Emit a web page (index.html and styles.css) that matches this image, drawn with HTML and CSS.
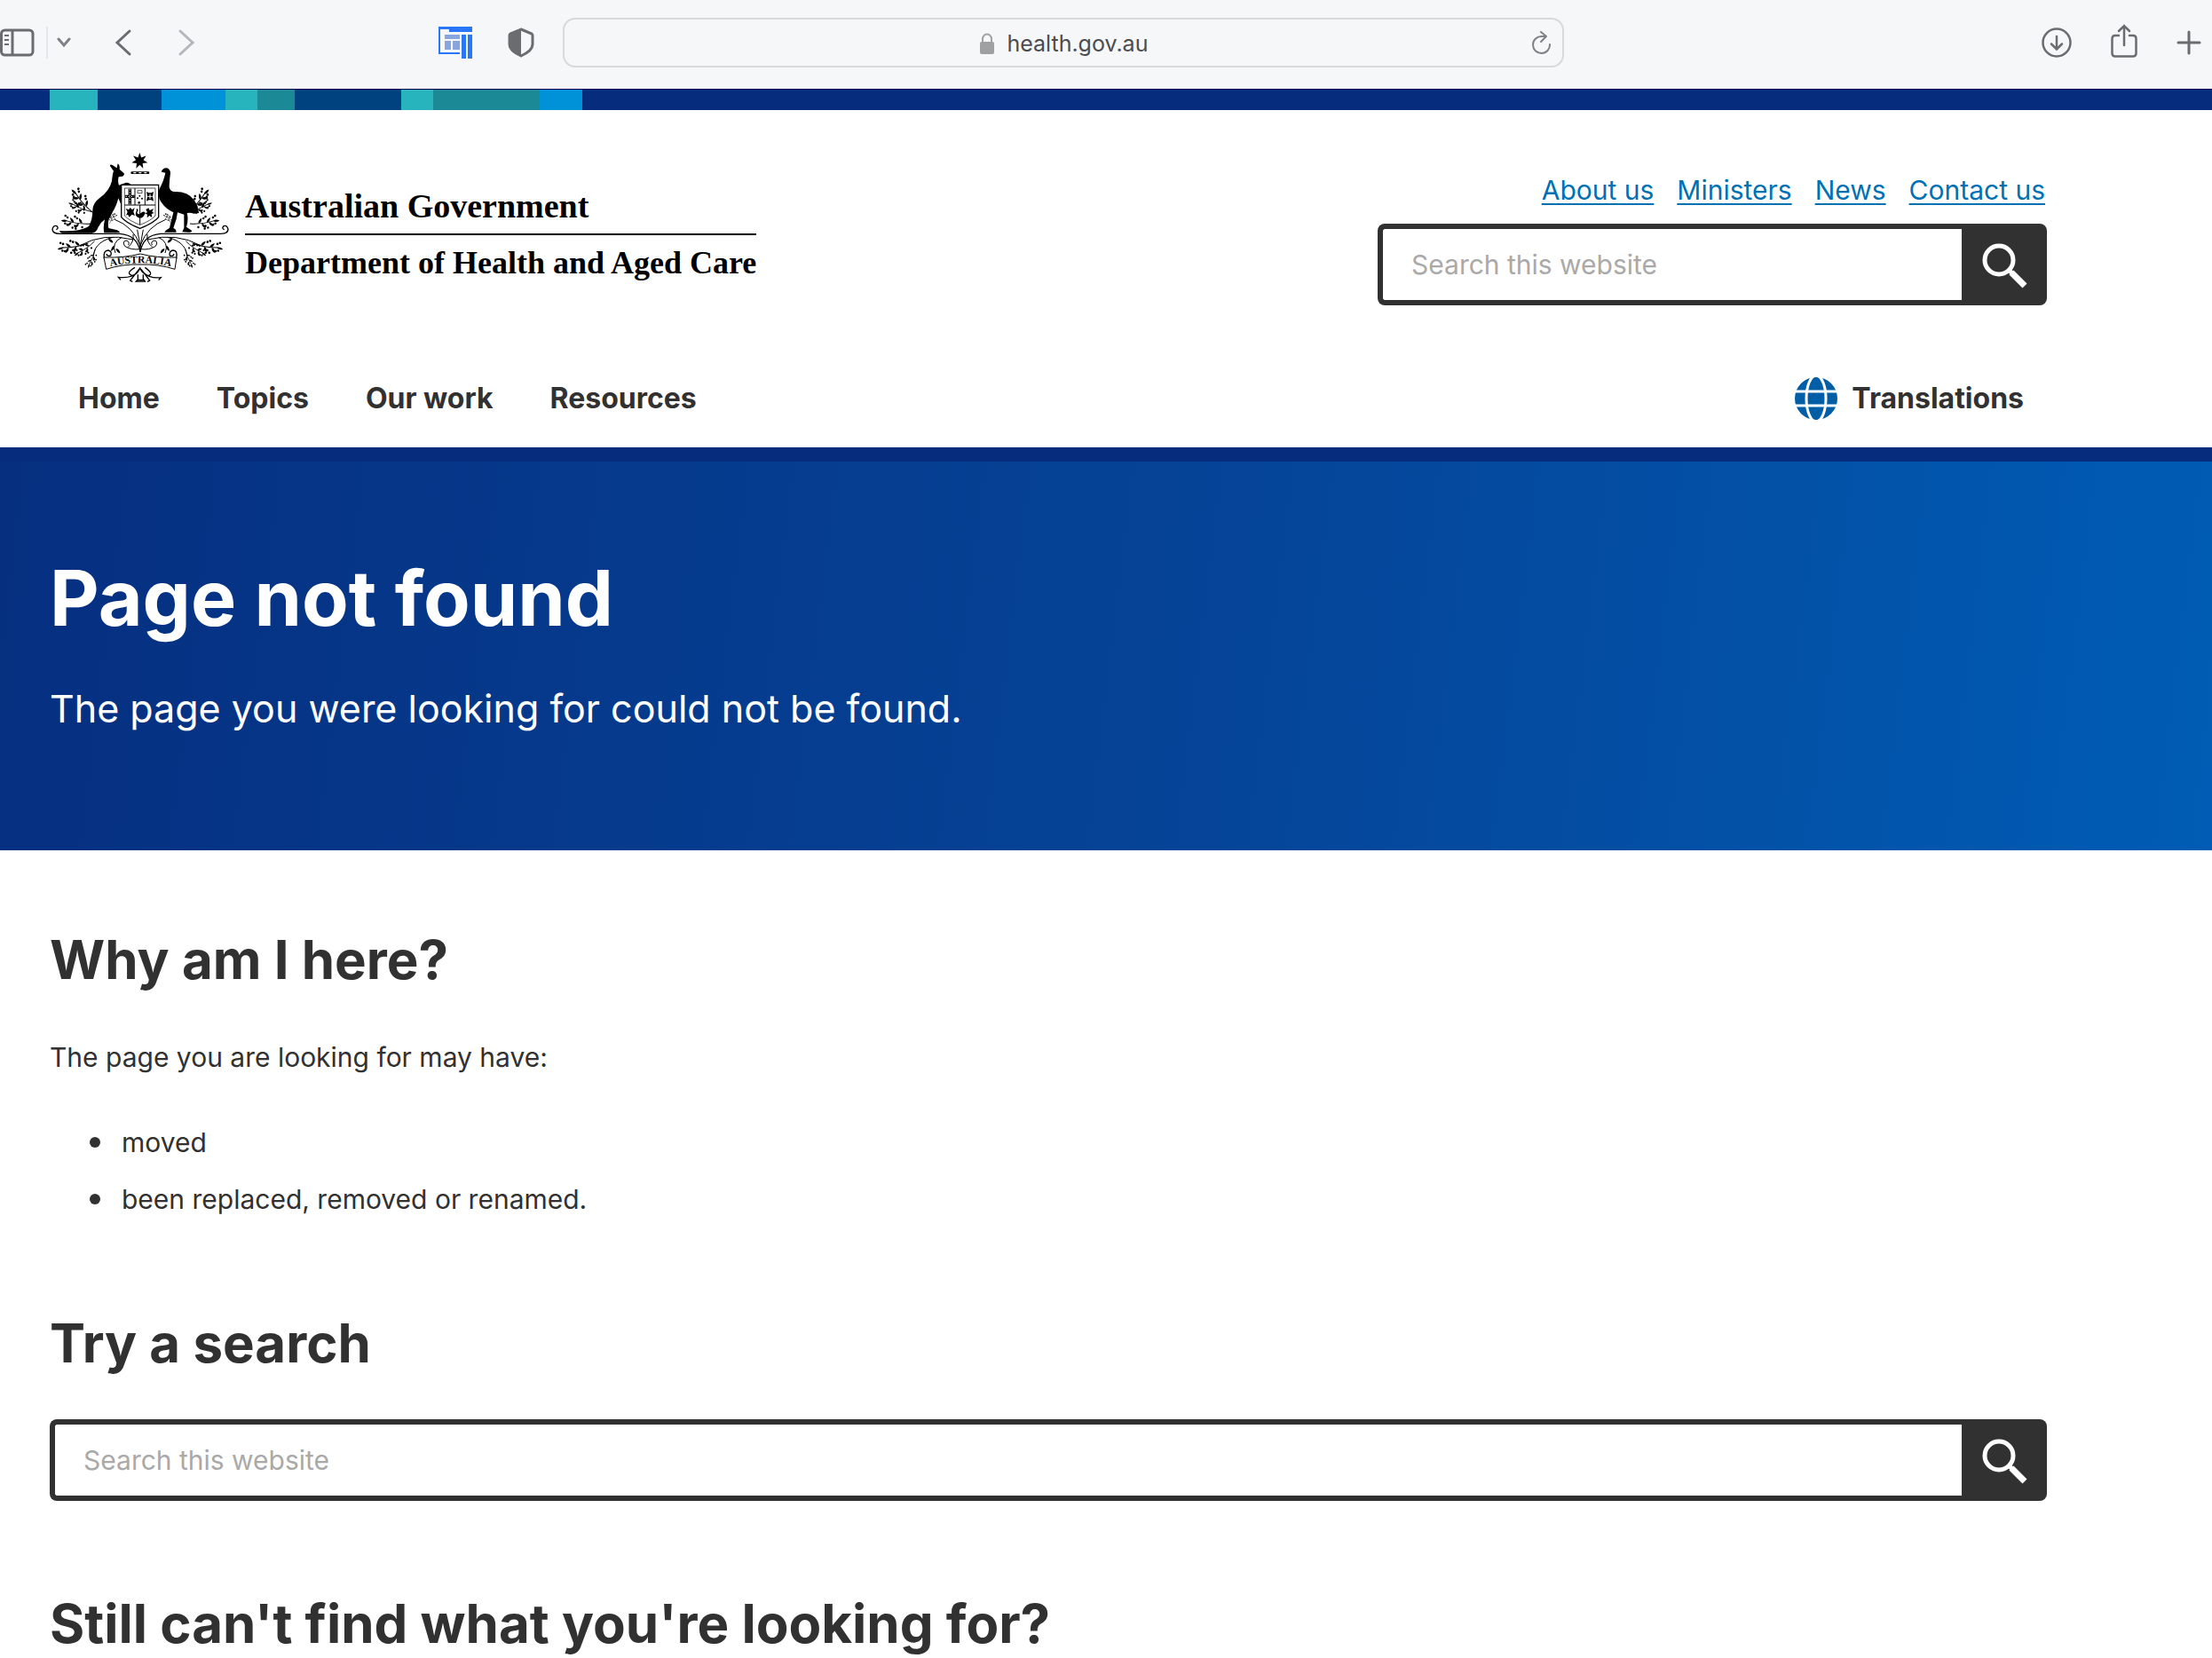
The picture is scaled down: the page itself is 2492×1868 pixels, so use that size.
FILE: index.html
```html
<!DOCTYPE html>
<html lang="en">

<head>
    <meta charset="UTF-8">
    <meta name="viewport" content="width=device-width, initial-scale=1">
    <title>Page not found</title>
    <link rel="stylesheet" href="styles.css">
</head>

<body>

    <div class="toolbar">
        <div class="tools">
            <button class="tool" aria-label="Sidebar">
                <svg width="40" height="32" viewBox="0 0 40 32" fill="none" stroke="#6b6c6f" stroke-width="3">
                    <rect x="1.5" y="2" width="35.500" height="28" rx="4" />
                    <path d="M14 2v28" />
                    <path d="M5 8h5M5 13h5M5 18h5" stroke-width="2" />
                </svg>
            </button>
            <span class="divider"></span>
            <button class="tool chevron" aria-label="Tab groups">
                <svg width="16" height="12" viewBox="0 0 16 12" fill="none" stroke="#7f8188" stroke-width="3" stroke-linecap="round">
                    <path d="M2 2l6 7 6-7" />
                </svg>
            </button>
            <button class="tool back" aria-label="Back">
                <svg width="20" height="32" viewBox="0 0 20 32" fill="none" stroke="#6b6c6f" stroke-width="3" stroke-linecap="round">
                    <path d="M17 3L3 16l14 13" />
                </svg>
            </button>
            <button class="tool forward" aria-label="Forward">
                <svg width="20" height="32" viewBox="0 0 20 32" fill="none" stroke="#b6b7ba" stroke-width="3" stroke-linecap="round">
                    <path d="M3 3l14 13L3 29" />
                </svg>
            </button>
        </div>

        <div class="tools extensions">
            <button class="tool" aria-label="Reader extension">
                <svg width="38" height="36" viewBox="0 0 38 36">
                    <path fill="#2877f6" d="M0 0h38v6H12V3H2v26h22v2H0z" />
                    <path fill="#88a5de" d="M7 9h17v5H7zM7 16h7v10H7zM16 16h8v10h-8z" />
                    <path fill="#2877f6" d="M26 9h5v27h-5zM33 9h5v27h-5z" />
                </svg>
            </button>
            <button class="tool" aria-label="Privacy report">
                <svg width="30" height="34" viewBox="0 0 30 34">
                    <path d="M15 2l12 5q1 1 1 2v10q0 7-13 13Q2 26 2 19V9q0-1 1-2z" fill="none" stroke="#6b6c6f" stroke-width="3" />
                    <path d="M15 1v32Q1 27 1 19V7z" fill="#6b6c6f" />
                </svg>
            </button>
        </div>

        <div class="address">
            <div class="url">
                <svg width="16" height="24" viewBox="0 0 16 24">
                    <rect y="10" width="16" height="14" rx="2" fill="#9fa0a2" />
                    <path d="M3 11V7a5 5.500 0 0 1 10 0v4" fill="none" stroke="#9fa0a2" stroke-width="2" />
                </svg>
                <span>health.gov.au</span>
            </div>
            <button class="tool reload" aria-label="Reload">
                <svg width="22" height="28" viewBox="0 0 22 28" fill="none" stroke="#7f8083" stroke-width="2" stroke-linecap="round" stroke-linejoin="round">
                    <path d="M20 16a9.500 9.500 0 1 1-9-9h4M10 2l6 5-6 6" />
                </svg>
            </button>
        </div>

        <div class="tools actions">
            <button class="tool" aria-label="Downloads">
                <svg width="34" height="34" viewBox="0 0 34 34" fill="none" stroke="#6b6c6f" stroke-width="2.500" stroke-linecap="round">
                    <circle cx="17" cy="17" r="15.500" />
                    <path d="M17 10v14M11 18.500l6 6 6-6" />
                </svg>
            </button>
            <button class="tool share" aria-label="Share">
                <svg width="30" height="38" viewBox="0 0 30 38" fill="none" stroke="#6b6c6f" stroke-width="2.500" stroke-linecap="round">
                    <path d="M9 13H5q-3.500 0-3.500 3.500V33q0 3.500 3.500 3.500h20q3.500 0 3.500-3.500V16.500q0-3.500-3.500-3.500h-4M15 24V2M9 8l6-6 6 6" />
                </svg>
            </button>
            <button class="tool" aria-label="New tab">
                <svg width="28" height="28" viewBox="0 0 28 28" stroke="#6b6c6f" stroke-width="3" stroke-linecap="round">
                    <path d="M14 2v24M2 14h24" />
                </svg>
            </button>
        </div>
    </div>

    <div class="colour-strip"></div>

    <header class="header">
        <div class="container">
            <div class="masthead">
                <a class="logo" href="#">
                    <svg class="crest" viewBox="48 30 606 450" role="img" aria-label="Commonwealth Coat of Arms">
                        <defs>
                            <path id="leaf" d="M0 0Q8 -9 22 0Q8 7 0 0Z" />
                            <g id="sprig">
                                <path d="M0 0Q40 -8 88 0" fill="none" stroke="#000" stroke-width="3" />
                                <use href="#leaf" transform="translate(84 0) rotate(-5)" />
                                <use href="#leaf" transform="translate(68 -3) rotate(-50)" />
                                <use href="#leaf" transform="translate(60 -3) rotate(48)" />
                                <use href="#leaf" transform="translate(42 -4) rotate(-58)" />
                                <use href="#leaf" transform="translate(30 -3) rotate(52)" />
                                <circle cx="54" cy="-15" r="4" />
                                <circle cx="62" cy="-22" r="4" />
                                <circle cx="50" cy="-24" r="4" />
                                <circle cx="50" cy="13" r="4" />
                                <circle cx="58" cy="18" r="4" />
                                <circle cx="84" cy="12" r="4" />
                                <circle cx="92" cy="17" r="4" />
                                <circle cx="82" cy="-13" r="4" />
                                <circle cx="90" cy="-10" r="4" />
                                <circle cx="28" cy="-16" r="4" />
                            </g>
                            <g id="branches">
                                <!-- wattle above the grass line -->
                                <use href="#sprig" transform="translate(194 238) rotate(-132)" />
                                <use href="#sprig" transform="translate(190 236) rotate(-158) scale(.8)" />
                                <use href="#sprig" transform="translate(186 276) rotate(-173) scale(.95)" />
                                <use href="#sprig" transform="translate(250 276) rotate(-60) scale(.4)" />
                                <!-- wattle below -->
                                <path d="M330 330Q230 305 150 350M262 322Q190 340 196 400M292 322Q255 340 270 375" fill="none" stroke="#000" stroke-width="3" />
                                <use href="#sprig" transform="translate(178 342) rotate(170)" />
                                <use href="#sprig" transform="translate(200 335) rotate(145) scale(.8)" />
                                <use href="#sprig" transform="translate(202 362) rotate(112) scale(.65)" />
                                <use href="#leaf" transform="translate(266 350) rotate(120)" />
                                <use href="#leaf" transform="translate(272 360) rotate(50)" />
                                <use href="#leaf" transform="translate(262 340) rotate(-140)" />
                                <!-- grass line and scroll -->
                                <path d="M354 372Q345 315 285 310H82Q58 310 57 295Q60 280 72 284Q80 292 70 296" fill="none" stroke="#000" stroke-width="4" />
                                <path d="M354 350Q330 285 268 262M344 296Q350 325 354 360M354 362Q322 366 302 352Q292 336 306 333Q320 336 314 348M330 312Q334 338 312 356" fill="none" stroke="#000" stroke-width="3" />
                            </g>
                            <path id="motto" d="M240 423Q354 395 470 423" />
                        </defs>

                        <use href="#branches" />
                        <use href="#branches" transform="translate(708 0) scale(-1 1)" />

                        <path d="M352 36L357.600 52.300 374 46.500 364.700 61 379 70 362 72 364 89 352 77 340 89 342 72 325 70 339.300 61 330 46.500 346.400 52.300Z" />
                        <rect x="322" y="100" width="63" height="8" rx="4" />
                        <path d="M331 104h9M349 104h9M367 104h9" stroke="#fff" stroke-width="4" />

                        <!-- kangaroo -->
                        <path d="M264 98L252 81Q251 74 260 78L275 88 278 73Q286 77 284 92Q293 100 299 106Q302 112 294 116L281 118Q277 132 282 146L306 137Q322 138 322 146L290 160Q286 178 293 193L298 210 290 214 280 190Q273 217 262 234L248 262Q244 275 247 291L276 298Q286 302 284 307H232Q228 290 234 262Q221 271 212 288Q206 306 190 308H90Q80 305 82 300Q150 304 180 285Q193 262 193 230Q194 206 216 190Q250 166 258 132Q260 108 264 98Z" />
                        <!-- emu -->
                        <path d="M426 98Q432 87 444 88Q456 92 456 106Q452 135 452 153Q456 170 475 168Q515 168 535 195Q550 215 552 240L535 242Q525 238 512 240Q518 262 510 287L529 300Q528 307 516 305L496 304 502 290 502 245 480 238Q478 262 466 290L474 296 476 305 436 305 440 299 453 290 466 238Q440 226 426 205Q412 188 418 160Q434 130 439 104L426 101Z" />

                        <!-- shield -->
                        <path d="M290 145H416V254Q398 275 353 292Q308 275 290 254Z" fill="#fff" stroke="#000" stroke-width="4" />
                        <path d="M301 156H405V249Q390 266 353 280Q316 266 301 249Z" fill="#fff" stroke="#000" stroke-width="2" />
                        <path d="M336 156V213M370 156V213M301 213H405M353 213V280" fill="none" stroke="#000" stroke-width="3" />
                        <path d="M319 158V211M303 184H335" stroke="#000" stroke-width="10" />
                        <path d="M319 160V209M305 184H333" stroke="#fff" stroke-width="3" stroke-dasharray="4 5" />
                        <path d="M375 168l8 4h8l8-4-3 16 3 16-8-4h-8l-8 4 3-16z" />
                        <path d="M387 176v16M379 184h16" stroke="#fff" stroke-width="3" />
                        <path d="M345 164h15v9h-15z" fill="none" stroke="#000" stroke-width="2" />
                        <circle cx="352" cy="182" r="3" />
                        <circle cx="345" cy="190" r="3" />
                        <circle cx="360" cy="191" r="3" />
                        <circle cx="350" cy="205" r="4" />
                        <path d="M305 224l10 5 5-7 7 7 8-7-4 14 5 13-10-4-9 9-5-9-6 3 5-11zM340 227q7-4 7 4l-4 8q8 9 12 2 10-10 16-2-5 18-19 18-17-4-13-19l3-7zM373 228l9-5 4 8 13-6-5 11 7 4-9 3 2 12-9-6-8 7 1-11-8-4 8-3z" />

                        <!-- bow behind the scroll -->
                        <path d="M336 424Q300 445 330 452Q350 440 353 424Q356 440 380 452Q402 446 370 424M344 440Q325 462 280 457L288 466M364 440Q385 462 424 458L416 467M350 430L320 468 328 472M357 430L386 468 378 472M345 466L340 471H370L366 464M346 448V466H364V448" fill="none" stroke="#000" stroke-width="4" />
                        <path d="M232 394Q228 366 246 366Q260 370 254 384Q242 388 240 378M476 394Q482 366 464 366Q450 370 454 384Q466 388 468 378" fill="none" stroke="#000" stroke-width="4" />
                        <path d="M231 390Q300 392 354 378Q408 392 477 390L471 430Q415 412 354 414Q293 412 239 430Z" fill="#fff" stroke="#000" stroke-width="3" />
                        <text class="motto"><textPath href="#motto" startOffset="50%" text-anchor="middle">AUSTRALIA</textPath></text>
                    </svg>
                    <span class="logo-text">
                        <span class="government">Australian Government</span>
                        <span class="department">Department of Health and Aged Care</span>
                    </span>
                </a>

                <div class="utility">
                    <nav class="quick-links">
                        <a href="#">About us</a>
                        <a href="#">Ministers</a>
                        <a href="#">News</a>
                        <a href="#">Contact us</a>
                    </nav>
                    <form class="search">
                        <input type="search" placeholder="Search this website" aria-label="Search this website">
                        <button type="button" aria-label="Search">
                            <svg width="54" height="54" viewBox="0 0 54 54" fill="none" stroke="#fff">
                                <circle cx="21" cy="22" r="16" stroke-width="5" />
                                <path d="M32 33l5 5" stroke-width="5" />
                                <path d="M35 36l15 15" stroke-width="7" />
                            </svg>
                        </button>
                    </form>
                </div>
            </div>

            <nav class="main-nav">
                <a href="#">Home</a>
                <a href="#">Topics</a>
                <a href="#">Our work</a>
                <a href="#">Resources</a>
                <a class="translations" href="#">
                    <svg width="48" height="48" viewBox="0 0 48 48">
                        <circle cx="24" cy="24" r="24" fill="#005ea6" />
                        <g fill="none" stroke="#fff" stroke-width="3">
                            <path d="M0 16h48M0 32h48" />
                            <ellipse cx="24" cy="24" rx="11" ry="26" />
                        </g>
                    </svg>
                    Translations
                </a>
            </nav>
        </div>
    </header>

    <section class="hero">
        <div class="container">
            <h1>Page not found</h1>
            <p>The page you were looking for could not be found.</p>
        </div>
    </section>

    <main class="container content">
        <section>
            <h2>Why am I here?</h2>
            <p>The page you are looking for may have:</p>
            <ul>
                <li>moved</li>
                <li>been replaced, removed or renamed.</li>
            </ul>
        </section>

        <section>
            <h2>Try a search</h2>
            <form class="search">
                <input type="search" placeholder="Search this website" aria-label="Search this website">
                <button type="button" aria-label="Search">
                    <svg width="54" height="54" viewBox="0 0 54 54" fill="none" stroke="#fff">
                        <circle cx="21" cy="22" r="16" stroke-width="5" />
                        <path d="M32 33l5 5" stroke-width="5" />
                        <path d="M35 36l15 15" stroke-width="7" />
                    </svg>
                </button>
            </form>
        </section>

        <section>
            <h2>Still can't find what you're looking for?</h2>
        </section>
    </main>

</body>

</html>
```

FILE: styles.css
```css
* {
    box-sizing: border-box;
}

body {
    margin: 0;
    background: #fff;
    color: #313131;
    font-family: Inter, "Liberation Sans", sans-serif;
    font-size: 30px;
    line-height: 48px;
}

h1,
h2,
p,
ul {
    margin: 0;
}

svg {
    display: block;
}

.container {
    max-width: 2362px;
    padding: 0 56px;
}

/* Browser toolbar */
.toolbar {
    display: flex;
    align-items: center;
    height: 100px;
    padding: 0 12px 4px 0;
    background: #f6f7f9;
}

.tools {
    display: flex;
    align-items: center;
}

.tool {
    padding: 0;
    border: none;
    background: none;
    cursor: pointer;
}

.divider {
    width: 2px;
    height: 36px;
    margin: 0 10px 0 12px;
    background: #e4e5e8;
}

.back {
    margin-left: 49px;
}

.forward {
    margin-left: 51px;
}

.extensions {
    gap: 40px;
    margin: 0 32px 0 11vw;
}

.address {
    display: flex;
    flex: 1;
    align-items: center;
    height: 56px;
    padding-right: 12px;
    border: 2px solid #d8d9db;
    border-radius: 14px;
}

.url {
    display: flex;
    flex: 1;
    justify-content: center;
    align-items: center;
    gap: 14px;
    padding: 2px 0 0 36px;
    color: #4c4c4e;
    font-size: 25px;
}

.actions {
    gap: 44px;
    margin-left: 21.6vw;
}

.share {
    margin-bottom: 4px;
}

.colour-strip {
    height: 24px;
    background: linear-gradient(90deg,
        #062c7d 56px,
        #28b4bd 56px 110px,
        #00427f 110px 182px,
        #0092d9 182px 254px,
        #28b4bd 254px 290px,
        #1b8a96 290px 332px,
        #00427f 332px 452px,
        #28b4bd 452px 488px,
        #1b8a96 488px 608px,
        #0092d9 608px 656px,
        #062c7d 656px);
    box-shadow: inset 0 1px #000050;
}

/* Header */
.header {
    padding: 46px 0 31px;
    border-bottom: 16px solid #062c7d;
}

.masthead {
    display: flex;
    justify-content: space-between;
}

.logo {
    display: flex;
    gap: 18px;
    color: #000;
    text-decoration: none;
}

.crest {
    width: 202px;
    height: 150px;
}

.motto {
    font-family: "Liberation Serif", serif;
    font-size: 35px;
    font-weight: bold;
}

.logo-text {
    display: flex;
    flex-direction: column;
    padding-top: 38px;
    font-family: "Liberation Serif", serif;
    font-weight: bold;
    white-space: nowrap;
}

.government {
    padding-bottom: 7px;
    border-bottom: 2px solid #000;
    font-size: 38px;
}

.department {
    padding-top: 7px;
    font-size: 36px;
}

.utility {
    display: flex;
    flex-direction: column;
    gap: 14px;
    width: 754px;
    padding-top: 20px;
}

.quick-links {
    display: flex;
    justify-content: flex-end;
    gap: 26px;
    padding-right: 2px;
}

.quick-links a {
    color: #0071b3;
    text-decoration-thickness: 2px;
    text-underline-offset: 4px;
}

.search {
    display: flex;
    height: 92px;
}

.search input {
    flex: 1;
    min-width: 0;
    padding: 0 32px;
    border: 6px solid #313131;
    border-right: none;
    border-radius: 8px 0 0 8px;
    background: #fff;
    color: #313131;
    font-family: inherit;
    font-size: 30px;
}

.search input::placeholder {
    color: #a9a9a9;
}

.search button {
    display: flex;
    justify-content: center;
    align-items: center;
    width: 96px;
    padding: 0;
    border: none;
    border-radius: 0 8px 8px 0;
    background: #313131;
    cursor: pointer;
}

.main-nav {
    display: flex;
    gap: 64px;
    margin-top: 81px;
    padding: 0 26px 0 32px;
    font-size: 32px;
    font-weight: bold;
}

.main-nav a {
    color: #313131;
    text-decoration: none;
}

.main-nav .translations {
    display: flex;
    gap: 16px;
    margin-left: auto;
}

/* Banner */
.hero {
    padding: 104px 0 130px;
    background: linear-gradient(97deg, #062f80, #054498 55%, #005cb4);
    color: #fff;
}

.hero h1 {
    font-size: 86px;
    line-height: 100px;
}

.hero p {
    margin-top: 44px;
    font-size: 43px;
    line-height: 60px;
}

/* Content */
.content {
    display: flex;
    flex-direction: column;
    gap: 101px;
    padding-top: 86px;
}

.content h2 {
    margin-bottom: 49px;
    font-size: 60px;
    line-height: 74px;
}

.content section:last-child h2 {
    margin-bottom: 0;
}

.content ul {
    display: flex;
    flex-direction: column;
    gap: 16px;
    margin-top: 48px;
    padding-left: 45px;
    list-style: none;
}

.content li {
    display: flex;
    align-items: center;
    gap: 24px;
}

.content li::before {
    content: "";
    width: 12px;
    height: 12px;
    border-radius: 50%;
    background: #313131;
}
```
